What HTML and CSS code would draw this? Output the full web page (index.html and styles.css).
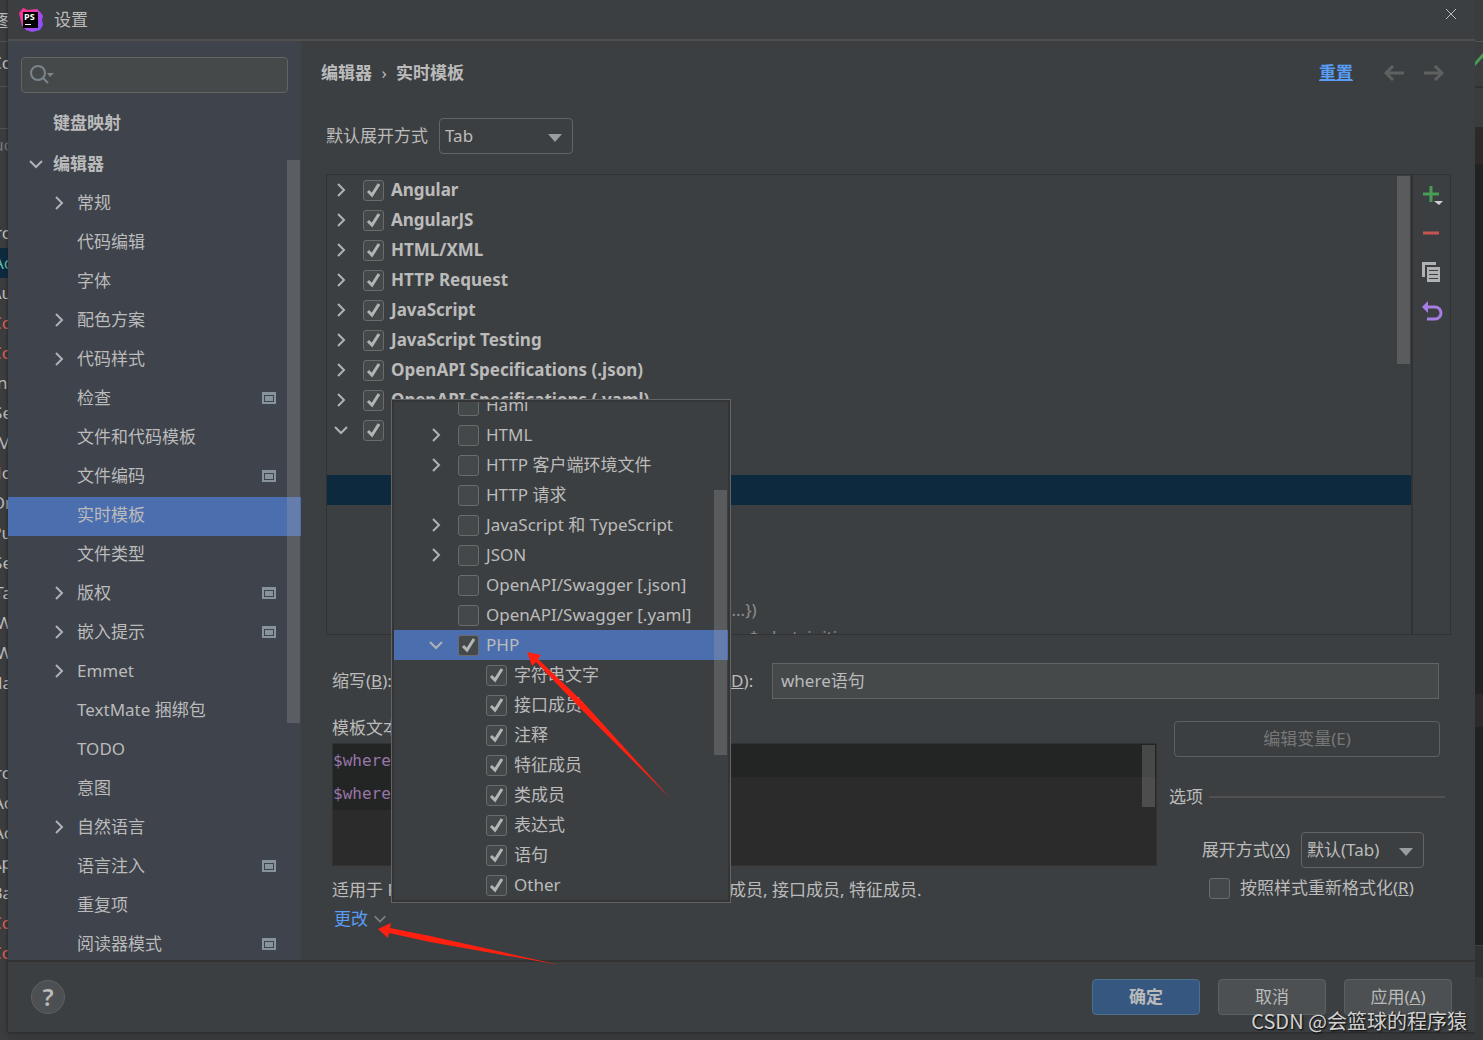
FILE: index.html
```html
<!DOCTYPE html>
<html lang="zh-CN">
<head>
<meta charset="utf-8">
<title>设置</title>
<link rel="stylesheet" href="styles.css">
</head>
<body>
<svg class="defs" width="0" height="0" aria-hidden="true">
  <symbol id="right" viewBox="0 0 16 16"><path d="M5 2l6 6-6 6" fill="none" stroke="currentColor" stroke-width="2"/></symbol>
  <symbol id="down" viewBox="0 0 16 16"><path d="M2 5l6 6 6-6" fill="none" stroke="currentColor" stroke-width="2"/></symbol>
  <symbol id="scope" viewBox="0 0 14 12"><path d="M0 0h14v12H0zM1 3v8h12V3z" fill-rule="evenodd" fill="#87939a"/><path d="M0 0h2v12H0zM12 0h2v12h-2zM0 10h14v2H0zM3 4h8v5H3z" fill="#87939a"/></symbol>
  <symbol id="caret" viewBox="0 0 14 8"><path d="M0 0h14L7 8z" fill="currentColor"/></symbol>
</svg>

<aside class="behind behind-left" aria-hidden="true">
  <p class="bar">图(</p><p class="bar tall">Co</p><p class="bar"></p><p class="bar dim">uc</p><p class="space"></p>
  <p>ro</p><p class="active">Ac</p><p>Au</p><p class="err">Co</p><p class="err">Co</p><p>ni</p><p>Se</p><p>M</p><p>No</p><p>Or</p><p>Pu</p><p>Se</p><p>Ta</p><p>W</p><p>W</p><p>da</p>
  <p></p><p></p>
  <p>ro</p><p>Ac</p><p>Ac</p><p>Ap</p><p>Ba</p><p class="err">Co</p><p class="err">Co</p>
</aside>

<main class="dialog">
  <header class="titlebar">
    <svg class="logo" width="26" height="26" viewBox="0 0 26 26">
      <defs><linearGradient id="lg" x1="0" y1="0" x2="1" y2="1"><stop offset="0" stop-color="#ff318c"/><stop offset=".35" stop-color="#f23a9c"/><stop offset=".55" stop-color="#b345f1"/><stop offset="1" stop-color="#765af8"/></linearGradient></defs>
      <path d="M1 6L5 1l5 2 9-1 4 4 2 3-1 4 1 5-3 5-8 2-6-2-4-4z" fill="url(#lg)"/>
      <path d="M5 5h15v16H5z" fill="#000"/>
      <text x="6" y="13" class="logo-text">PS</text><path d="M7 17h6v1H7z" fill="#fff"/>
    </svg>
    <h1>设置</h1>
    <button class="icon-btn close" aria-label="关闭"><svg width="12" height="12" viewBox="0 0 12 12"><path d="M1 1l10 10M11 1L1 11" stroke="#bbb" fill="none"/></svg></button>
  </header>

  <div class="content">
    <nav class="sidebar">
      <label class="search">
        <svg width="26" height="20" viewBox="0 0 26 20"><circle cx="9" cy="8" r="7" fill="none" stroke="#7a858c" stroke-width="2"/><path d="M14 13l5 5" stroke="#7a858c" stroke-width="2"/><path d="M18 8h7l-4 4z" fill="#7a858c"/></svg>
        <input type="search" aria-label="搜索">
      </label>
      <ul class="tree">
        <li class="top first"><span>键盘映射</span></li>
        <li class="top"><svg class="chev"><use href="#down"/></svg><span>编辑器</span></li>
        <li><svg class="chev"><use href="#right"/></svg><span>常规</span></li>
        <li><span>代码编辑</span></li>
        <li><span>字体</span></li>
        <li><svg class="chev"><use href="#right"/></svg><span>配色方案</span></li>
        <li><svg class="chev"><use href="#right"/></svg><span>代码样式</span></li>
        <li><span>检查</span><svg class="scope"><use href="#scope"/></svg></li>
        <li><span>文件和代码模板</span></li>
        <li><span>文件编码</span><svg class="scope"><use href="#scope"/></svg></li>
        <li class="selected"><span>实时模板</span></li>
        <li><span>文件类型</span></li>
        <li><svg class="chev"><use href="#right"/></svg><span>版权</span><svg class="scope"><use href="#scope"/></svg></li>
        <li><svg class="chev"><use href="#right"/></svg><span>嵌入提示</span><svg class="scope"><use href="#scope"/></svg></li>
        <li><svg class="chev"><use href="#right"/></svg><span>Emmet</span></li>
        <li><span>TextMate 捆绑包</span></li>
        <li><span>TODO</span></li>
        <li><span>意图</span></li>
        <li><svg class="chev"><use href="#right"/></svg><span>自然语言</span></li>
        <li><span>语言注入</span><svg class="scope"><use href="#scope"/></svg></li>
        <li><span>重复项</span></li>
        <li><span>阅读器模式</span><svg class="scope"><use href="#scope"/></svg></li>
      </ul>
      <div class="thumb side-thumb"></div>
    </nav>

    <section class="page">
      <div class="crumbs">
        <h2>编辑器 <span class="sep">›</span> 实时模板</h2>
        <a class="reset" href="#">重置</a>
        <button class="icon-btn" aria-label="后退"><svg width="20" height="16" viewBox="0 0 20 16"><path d="M20 8H2M9 1L2 8l7 7" fill="none" stroke="#5f6161" stroke-width="3"/></svg></button>
        <button class="icon-btn" aria-label="前进"><svg width="20" height="16" viewBox="0 0 20 16"><path d="M0 8h18M11 1l7 7-7 7" fill="none" stroke="#5f6161" stroke-width="3"/></svg></button>
      </div>

      <div class="expand-row">
        <label for="expand">默认展开方式</label>
        <span class="select"><select id="expand"><option>Tab</option></select><svg class="caret"><use href="#caret"/></svg></span>
      </div>

      <div class="templates">
        <ul class="groups">
          <li><svg class="chev"><use href="#right"/></svg><label><input type="checkbox" checked>Angular</label></li>
          <li><svg class="chev"><use href="#right"/></svg><label><input type="checkbox" checked>AngularJS</label></li>
          <li><svg class="chev"><use href="#right"/></svg><label><input type="checkbox" checked>HTML/XML</label></li>
          <li><svg class="chev"><use href="#right"/></svg><label><input type="checkbox" checked>HTTP Request</label></li>
          <li><svg class="chev"><use href="#right"/></svg><label><input type="checkbox" checked>JavaScript</label></li>
          <li><svg class="chev"><use href="#right"/></svg><label><input type="checkbox" checked>JavaScript Testing</label></li>
          <li><svg class="chev"><use href="#right"/></svg><label><input type="checkbox" checked>OpenAPI Specifications (.json)</label></li>
          <li><svg class="chev"><use href="#right"/></svg><label><input type="checkbox" checked>OpenAPI Specifications (.yaml)</label></li>
          <li><svg class="chev"><use href="#down"/></svg><label><input type="checkbox" checked aria-label="PHP"></label></li>
          <li></li>
          <li class="current"></li>
          <li></li><li></li><li></li>
          <li class="hint">{...})</li>
          <li class="hint next">$what, initi</li>
          <li class="thumb list-thumb"></li>
        </ul>
        <div class="tools">
          <button class="icon-btn" aria-label="添加"><svg width="22" height="22" viewBox="0 0 22 22"><path d="M10 2v16M2 10h16" stroke="#499c54" stroke-width="3"/><path d="M13 17h9l-4 4z" fill="#d0d0d0"/></svg></button>
          <button class="icon-btn" aria-label="移除"><svg width="22" height="22" viewBox="0 0 22 22"><path d="M2 10h16" stroke="#c75450" stroke-width="3"/></svg></button>
          <button class="icon-btn" aria-label="复制"><svg width="22" height="22" viewBox="0 1 22 22"><path d="M1 1h14v3H4v12H1z" fill="#afb1b3"/><path d="M6 6h13v15H6zM8 9v1h9V9zM8 13v1h9v-1zM8 17v1h9v-1z" fill-rule="evenodd" fill="#afb1b3"/></svg></button>
          <button class="icon-btn" aria-label="还原"><svg width="22" height="22" viewBox="0 1 22 22"><path d="M7 7h7a6 6 0 010 12H6" fill="none" stroke="#a67de4" stroke-width="3"/><path d="M1 7l6-6v12z" fill="#a67de4"/></svg></button>
        </div>
      </div>

      <div class="names">
        <span>缩写(<u>B</u>):</span>
        <label class="desc-label" for="desc">(<u>D</u>):</label>
        <input id="desc" class="field" type="text" value="where语句">
      </div>

      <div class="editor">
        <div class="text-col">
          <span class="text-label">模板文本</span>
          <div class="code"><pre><code><span class="line caret-line">$where</span><span class="line"><span class="soft">$where</span></span></code></pre><div class="thumb code-thumb"></div></div>
          <p class="applies"><span>适用于 P</span><span class="rest">成员, 接口成员, 特征成员.</span></p>
          <a class="change" href="#">更改<svg class="chev small"><use href="#down"/></svg></a>
        </div>
        <div class="options">
          <button class="btn wide" disabled>编辑变量(E)</button>
          <div class="legend">选项</div>
          <div class="opt-row">
            <label for="by">展开方式(<u>X</u>)</label>
            <span class="select by"><select id="by"><option>默认(Tab)</option></select><svg class="caret"><use href="#caret"/></svg></span>
          </div>
          <label class="reformat"><input type="checkbox">按照样式重新格式化(<u>R</u>)</label>
        </div>
      </div>

      <div class="popup">
        <ul class="contexts">
          <li class="leaf"><label><input type="checkbox">Haml</label></li>
          <li><svg class="chev"><use href="#right"/></svg><label><input type="checkbox">HTML</label></li>
          <li><svg class="chev"><use href="#right"/></svg><label><input type="checkbox">HTTP 客户端环境文件</label></li>
          <li class="leaf"><label><input type="checkbox">HTTP 请求</label></li>
          <li><svg class="chev"><use href="#right"/></svg><label><input type="checkbox">JavaScript 和 TypeScript</label></li>
          <li><svg class="chev"><use href="#right"/></svg><label><input type="checkbox">JSON</label></li>
          <li class="leaf"><label><input type="checkbox">OpenAPI/Swagger [.json]</label></li>
          <li class="leaf"><label><input type="checkbox">OpenAPI/Swagger [.yaml]</label></li>
          <li class="selected"><svg class="chev"><use href="#down"/></svg><label><input type="checkbox" checked>PHP</label></li>
          <li class="child"><label><input type="checkbox" checked>字符串文字</label></li>
          <li class="child"><label><input type="checkbox" checked>接口成员</label></li>
          <li class="child"><label><input type="checkbox" checked>注释</label></li>
          <li class="child"><label><input type="checkbox" checked>特征成员</label></li>
          <li class="child"><label><input type="checkbox" checked>类成员</label></li>
          <li class="child"><label><input type="checkbox" checked>表达式</label></li>
          <li class="child"><label><input type="checkbox" checked>语句</label></li>
          <li class="child"><label><input type="checkbox" checked>Other</label></li>
        </ul>
        <div class="thumb popup-thumb"></div>
      </div>
      <svg class="arrows" width="300" height="330" viewBox="371 641 300 330" aria-hidden="true">
        <path d="M527 652l14 3-3 4 44 42 88 97-90-90-44-46-4 4zM378 929l13-6-1 5 40 8 130 29-130-23-41-9-1 5z" fill="#ff2010"/>
      </svg>
    </section>
  </div>

  <footer class="footer">
    <button class="help" aria-label="帮助">?</button>
    <button class="btn primary">确定</button>
    <button class="btn">取消</button>
    <button class="btn">应用(<u>A</u>)</button>
  </footer>
</main>

<aside class="behind behind-right" aria-hidden="true">
  <div class="r1"></div>
  <div class="r2"><svg width="8" height="14" viewBox="0 0 8 14"><path d="M-1 12L9 1" stroke="#499c54" stroke-width="3"/></svg></div>
  <div class="r3"></div><div class="r4"></div><div class="r5"></div><div class="r6"></div><div class="r7"></div><div class="r8"></div>
</aside>
<div class="watermark">CSDN @会篮球的程序猿</div>
</body>
</html>
```
FILE: styles.css
```css
* { box-sizing: border-box; }
body {
  margin: 0;
  min-height: 100vh;
  display: grid;
  grid-template-columns: 8px 1fr 8px;
  position: relative;
  overflow: hidden;
  background: #37393b;
  color: #bbbbbb;
  font: 17px/24px "Noto Sans", "Noto Sans CJK SC", sans-serif;
}
ul, p, h1, h2, pre { margin: 0; padding: 0; list-style: none; font-size: inherit; }
button, input, select { font: inherit; color: inherit; }
.defs { position: absolute; }

.behind { overflow: hidden; background: #3a3c3e; }
.behind p { height: 30px; margin-right: -4px; line-height: 30px; display: flex; justify-content: flex-end; }
.behind .bar { height: 42px; line-height: 42px; border-bottom: 1px solid #515354; }
.behind .tall { height: 45px; }
.behind .dim { border: 0; line-height: 32px; color: #777; }
.behind .space { height: 47px; }
.behind .active { background: #0d293e; color: #5fb8a8; }
.behind .err { color: #d9604f; }
.behind-right { background: #212323; }
.r1 { height: 42px; background: #3a3c3e; border-bottom: 1px solid #515354; }
.r2 { height: 46px; background: #3a3c3e; border-bottom: 2px solid #2d2f30; padding-top: 11px; }
.r2 svg { display: block; }
.r3 { height: 42px; background: #3a3c3e; border-bottom: 3px solid #2a2b2c; }
.r4 { height: 34px; background: #2b2a29; }
.r5 { height: 530px; }
.r6 { height: 33px; background: #2b2b2b; }
.r7 { height: 218px; }
.r8 { height: 95px; background: #303133; border-top: 1px solid #3c3f41; border-bottom: 63px solid #37393b; }

.dialog {
  margin-bottom: 8px;
  min-width: 0;
  display: flex;
  flex-direction: column;
  background: #3c3f41;
  box-shadow: 0 0 3px #1c1d1e;
}
.titlebar {
  height: 41px;
  flex: none;
  display: flex;
  align-items: center;
  gap: 10px;
  padding: 0 18px 0 10px;
  border-bottom: 2px solid #52504f;
}
.titlebar h1 { font-weight: 400; }
.logo-text { font: bold 9px "Open Sans", sans-serif; fill: #fff; }
.icon-btn { display: flex; padding: 0; border: 0; background: none; }
.close { margin: 0 0 11px auto; }

.content { flex: 1; display: flex; min-height: 0; }
.sidebar {
  flex: none;
  width: 293px;
  height: 919px;
  padding-top: 16px;
  position: relative;
  overflow: hidden;
  background: #3e434c;
}
.search {
  margin: 0 13px 10px;
  height: 36px;
  display: flex;
  align-items: center;
  padding: 0 7px;
  border: 1px solid #646464;
  border-radius: 4px;
  background: #45494a;
}
.search svg { flex: none; }
.search input { flex: 1; min-width: 0; border: 0; background: none; outline: 0; }
.tree li { height: 39px; display: flex; align-items: center; padding: 0 25px 4px 69px; }
.tree .first { height: 43px; }
.tree .top { padding-left: 45px; font-weight: 700; }
.tree .selected, .contexts .selected { background: #4b6eaf; }
.chev { width: 16px; height: 16px; flex: none; color: #afb1b3; }
.tree .chev { margin: 0 10px 0 -26px; }
.tree .top .chev { margin: 0 9px 0 -25px; }
.scope { width: 14px; height: 12px; margin-left: auto; }
.thumb { position: absolute; width: 13px; background: rgba(166, 166, 166, .28); }
.side-thumb { top: 119px; right: 1px; height: 563px; }

.page {
  flex: 1;
  min-width: 0;
  position: relative;
  display: flex;
  flex-direction: column;
  padding: 20px 24px 0 25px;
}
.crumbs { display: flex; align-items: center; gap: 20px; height: 24px; padding-right: 7px; margin-left: -5px; }
.crumbs h2 { margin-right: auto; }
.sep { margin: 0 5px; font-weight: 400; }
a { color: #589df6; }
.reset { margin-right: 11px; font-weight: 700; }
.expand-row { display: flex; align-items: center; gap: 11px; margin: 33px 0 20px; }
.select { position: relative; display: flex; }
.select select {
  appearance: none;
  width: 134px;
  height: 36px;
  padding: 0 5px;
  border: 1px solid #646464;
  border-radius: 4px;
  background: #3c3f41;
}
.select.by select { width: 123px; }
.caret { position: absolute; right: 11px; top: 16px; width: 14px; height: 8px; color: #9a9da0; }

.templates { flex: 1; display: flex; border: 1px solid #323232; }
.groups { flex: 1; height: 459px; position: relative; overflow: hidden; font-weight: 700; }
.groups li:not(.thumb) { height: 30px; display: flex; align-items: center; padding-left: 6px; }
.groups .current { background: #0d293e; }
.groups .hint { margin-left: 392px; font-weight: 400; color: #8c8c8c; }
.groups li.next:not(.thumb) { padding: 0 0 6px 30px; }
.groups .list-thumb { right: 1px; top: 1px; height: 188px; }
label { display: flex; align-items: center; }
input[type="checkbox"] {
  appearance: none;
  flex: none;
  width: 21px;
  height: 21px;
  margin: 0 7px 0 0;
  border: 1px solid #6b6b6b;
  border-radius: 3px;
  background: #43494a;
}
input[type="checkbox"]:checked {
  background: #43494a url("data:image/svg+xml,%3Csvg xmlns='http://www.w3.org/2000/svg' viewBox='0 0 19 19'%3E%3Cpath d='M4 10l4 4 7-11' fill='none' stroke='%23b4b4b4' stroke-width='3'/%3E%3C/svg%3E");
}
.groups .chev { margin-right: 14px; }
.tools {
  width: 39px;
  padding: 9px 0 0 8px;
  display: flex;
  flex-direction: column;
  gap: 17px;
  border-left: 2px solid #323232;
}

.names { display: flex; align-items: center; margin: 28px 12px 0 6px; }
.names > span { width: 60px; }
.desc-label { margin-left: 334px; width: 46px; }
.field {
  flex: 1;
  min-width: 0;
  height: 36px;
  padding: 0 8px 3px;
  border: 1px solid #646464;
  background: #45494a;
}
.editor { display: flex; gap: 12px; padding: 0 6px 0 6px; margin-top: 17px; height: 244px; }
.text-col { flex: 1; min-width: 0; }
.text-label { display: block; }
.code {
  height: 123px;
  margin-top: 3px;
  position: relative;
  border: 1px solid #323232;
  background: #2b2b2b;
  color: #9876aa;
}
.code pre, .code code { font: 16px/34px "DejaVu Sans Mono", monospace; }
.line { display: block; height: 33px; }
.caret-line { background: #232525; }
.soft { display: block; height: 33px; width: 180px; background: #232525; }
.code-thumb { top: 1px; right: 1px; height: 62px; }
.applies { display: flex; margin-top: 12px; }
.applies span { width: 397px; flex: none; white-space: nowrap; }
.change { display: inline-flex; align-items: center; gap: 5px; margin: 5px 0 0 2px; text-decoration: none; }
.small { width: 14px; height: 14px; color: #7d8082; }

.options { width: 276px; flex: none; display: flex; flex-direction: column; }
.btn {
  width: 108px;
  height: 36px;
  padding: 0;
  border: 1px solid #5e6060;
  border-radius: 4px;
  background: #4c5052;
}
.wide { width: auto; margin: 5px 5px 0; background: none; color: #777; }
.legend { display: flex; align-items: center; gap: 6px; margin-top: 28px; }
.legend::after { content: ""; flex: 1; height: 2px; background: #515151; }
.opt-row { display: flex; align-items: center; justify-content: flex-end; gap: 11px; margin: 23px 21px 0 0; }
.reformat { margin: 8px 0 0 40px; }
.reformat input[type="checkbox"] { margin-right: 10px; }

.popup {
  position: absolute;
  left: 90px;
  top: 358px;
  width: 340px;
  height: 504px;
  overflow: hidden;
  border: 1px solid #646464;
  padding: 2px;
  background: #3c3f41;
  box-shadow: inset 0 0 0 2px #333536;
}
.contexts { height: 498px; overflow: hidden; display: flex; flex-direction: column; justify-content: flex-end; }
.contexts li { height: 30px; flex: none; display: flex; align-items: center; padding-left: 34px; }
.contexts .leaf { padding-left: 64px; }
.contexts .child { padding-left: 92px; }
.contexts .chev { margin-right: 14px; }
.popup-thumb { top: 90px; right: 3px; height: 265px; }
.arrows { position: absolute; left: 70px; top: 600px; pointer-events: none; }

.footer {
  height: 72px;
  flex: none;
  display: flex;
  align-items: center;
  gap: 18px;
  padding: 0 23px;
  border-top: 2px solid #323232;
}
.help {
  width: 34px;
  height: 34px;
  margin-right: auto;
  padding: 0;
  border: 1px solid #5e6060;
  border-radius: 50%;
  background: #4c5052;
  font-size: 24px;
  font-weight: 600;
}
.primary { border-color: #4c708c; background: #365880; font-weight: 700; }
.watermark {
  position: absolute;
  right: 16px;
  bottom: 4px;
  font: 20px/30px "Noto Sans CJK SC", sans-serif;
  color: #d2d2d2;
  text-shadow: 1px 1px 2px #000;
}
```
